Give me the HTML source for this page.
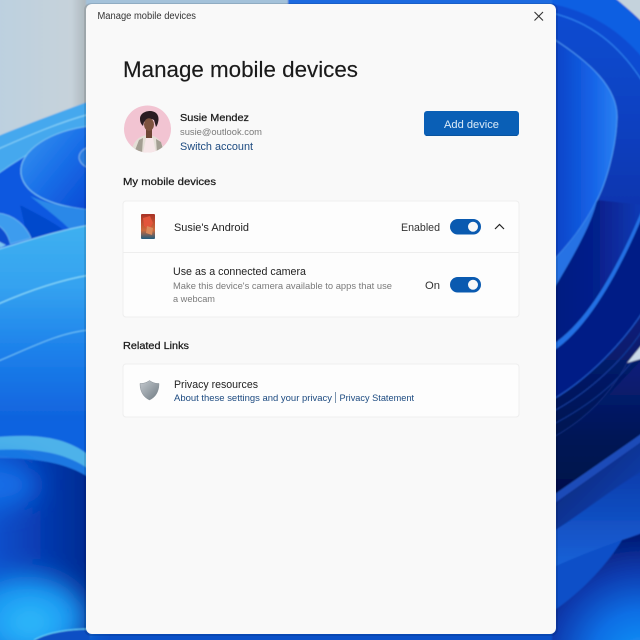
<!DOCTYPE html>
<html><head><meta charset="utf-8"><title>Manage mobile devices</title>
<style>html,body{margin:0;padding:0;width:640px;height:640px;overflow:hidden;background:#0a50c8}svg{display:block}text{font-family:"Liberation Sans",sans-serif}</style>
</head><body>
<svg xmlns="http://www.w3.org/2000/svg" width="640" height="640" viewBox="0 0 640 640">
<defs>
<filter id="soft" x="-5%" y="-5%" width="110%" height="110%"><feGaussianBlur stdDeviation=".7"/></filter>
<filter id="tiny" x="-5%" y="-5%" width="110%" height="110%"><feGaussianBlur stdDeviation=".35"/></filter>
<filter id="wide" x="-60%" y="-60%" width="220%" height="220%"><feGaussianBlur stdDeviation="13"/></filter>
<linearGradient id="sky" x1="0" y1="0" x2="1" y2="0"><stop offset="0" stop-color="#bcd0e0"/><stop offset=".8" stop-color="#c6d2da"/><stop offset="1" stop-color="#a6b0b6"/></linearGradient>
<linearGradient id="band" x1="0" y1="0" x2="0" y2="1"><stop offset="0" stop-color="#3eb0f0"/><stop offset=".3" stop-color="#34a2f0"/><stop offset=".62" stop-color="#1c80ea"/><stop offset="1" stop-color="#0e5edc"/></linearGradient>
<linearGradient id="low" x1="0" y1="0" x2="1" y2="0"><stop offset="0" stop-color="#0c50cc"/><stop offset=".5" stop-color="#063ab0"/><stop offset="1" stop-color="#032a90"/></linearGradient>
<linearGradient id="oval" x1="0" y1="0" x2="1" y2="1"><stop offset="0" stop-color="#3c98f0"/><stop offset=".5" stop-color="#1a70e8"/><stop offset="1" stop-color="#0848d4"/></linearGradient>
<linearGradient id="rb" x1="0" y1="0" x2="1" y2="0"><stop offset="0" stop-color="#0a40c4"/><stop offset=".6" stop-color="#1462e6"/><stop offset="1" stop-color="#2a80f2"/></linearGradient>
<linearGradient id="rd" x1="0" y1="0" x2="0" y2="1"><stop offset="0" stop-color="#0e4ed4"/><stop offset=".2" stop-color="#0c40c0"/><stop offset=".4" stop-color="#0a2ea4"/><stop offset="1" stop-color="#0a2ea4"/></linearGradient>
<linearGradient id="mid" x1="0" y1="0" x2="1" y2="0"><stop offset="0" stop-color="#061a80"/><stop offset=".5" stop-color="#06208c"/><stop offset="1" stop-color="#0c3cb8"/></linearGradient>
<linearGradient id="nav" x1="0" y1="0" x2="0" y2="1"><stop offset="0" stop-color="#08207c"/><stop offset=".6" stop-color="#041454"/><stop offset="1" stop-color="#03104a"/></linearGradient>
<linearGradient id="r1" x1="0" y1="0" x2="1" y2="1"><stop offset="0" stop-color="#06206c"/><stop offset="1" stop-color="#0e48c0"/></linearGradient>
<linearGradient id="r2" x1="0" y1="0" x2="0" y2="1"><stop offset="0" stop-color="#0a3cac"/><stop offset="1" stop-color="#1862d8"/></linearGradient>
<radialGradient id="rg" cx="640" cy="660" r="122" gradientUnits="userSpaceOnUse"><stop offset="0" stop-color="#1498fa"/><stop offset=".4" stop-color="#0e6ee4"/><stop offset=".72" stop-color="#0a3cb0"/><stop offset="1" stop-color="#041c78"/></radialGradient>
<linearGradient id="sh" x1="0" y1="0" x2="1" y2="1"><stop offset="0" stop-color="#c4cacf"/><stop offset=".5" stop-color="#9aa2a9"/><stop offset="1" stop-color="#6f7a82"/></linearGradient>
<linearGradient id="ph" x1="0" y1="0" x2="0" y2="1"><stop offset="0" stop-color="#a93226"/><stop offset=".65" stop-color="#cc6a3c"/><stop offset="1" stop-color="#1f5c80"/></linearGradient>
<clipPath id="av"><circle cx="147.5" cy="129" r="23.5"/></clipPath>
</defs>

<g filter="url(#soft)">
<!-- Left wallpaper -->
<rect x="-4" y="-4" width="94" height="160" fill="url(#sky)"/>
<rect x="-4" y="150" width="94" height="500" fill="#0c60e6"/>
<path d="M-4 137C30 123 60 112 90 101V232H-4Z" fill="#44a8ee"/>
<path d="M-4 150C30 135 60 122 90 114" stroke="#86d0f6" stroke-width="1.200" fill="none"/>
<path d="M-4 175C28 152 58 136 90 127V240H-4Z" fill="#0a58e0"/>
<path d="M-4 175C28 152 58 136 90 127" stroke="#6cc0f4" stroke-width="1" fill="none"/>
<path d="M90 126C52 130 18 150 21 174C25 198 60 207 90 210Z" fill="url(#oval)" stroke="#78c4f4" stroke-width="1"/>
<path d="M79 158C79 152 84 148 90 147V168C84 167 80 163 79 158Z" fill="#2c7cdf" stroke="#8ec8f0" stroke-width=".7"/>
<path d="M30 196C50 212 68 226 74 234L90 228V210C65 207 45 203 30 196Z" fill="#2a88e8"/>
<path d="M20 205C40 215 58 225 66 232L28 240Z" fill="#0648cc"/>
<path d="M-4 213C14 214 26 226 31 238L10 244C8 232 0 226 -4 224Z" fill="#3c9cee" stroke="#7cc8f6" stroke-width=".6"/>
<path d="M-4 226C4 228 8 236 10 244L-4 248Z" fill="#0a4ed0"/>
<path d="M-4 240L6 245L0 248Z" fill="#7cc4f0"/>
<path d="M-4 250C30 240 60 230 90 225V430H-4Z" fill="url(#band)"/>
<path d="M-4 250C30 240 60 230 90 225" stroke="#8cd6f8" stroke-width="1" fill="none"/>
<path d="M-4 305C30 290 60 280 90 275" stroke="#86d8f8" stroke-width="1.200" fill="none"/>
<path d="M-4 362C30 348 60 332 90 330" stroke="#70c4f6" stroke-width="1" fill="none"/>
<rect x="-4" y="420" width="94" height="50" fill="#1064e0"/>
<path d="M-4 458C35 456 65 462 90 478V650H-4Z" fill="url(#low)"/>
<path d="M-4 437C35 434 65 436 90 456V470C65 452 35 450 -4 450Z" fill="#4db2ea"/>
<path d="M-4 450C35 448 65 452 90 470V478C65 462 35 458 -4 458Z" fill="#1c78e2"/>
<ellipse cx="-8" cy="485" rx="45" ry="22" fill="#1670e8" filter="url(#wide)"/>
<ellipse cx="28" cy="618" rx="58" ry="42" fill="#1c9cf4" filter="url(#wide)"/>
<ellipse cx="30" cy="622" rx="26" ry="16" fill="#30bcfa" filter="url(#wide)"/>
<path d="M34 640C48 632 70 629 90 629V650H34Z" fill="#0a50c4"/>
<path d="M34 640C48 632 70 629 90 629" stroke="#6cdcfa" stroke-width="1" fill="none"/>

<!-- Top strip -->
<rect x="86" y="-4" width="206" height="9" fill="#a4c2da"/>
<rect x="288" y="-4" width="272" height="9" fill="#1a6ae0"/>

<!-- Right wallpaper -->
<rect x="552" y="-4" width="92" height="650" fill="url(#rd)"/>
<path d="M612 -4H644V24Q628 8 612 -4Z" fill="#c4d2dc"/>
<path d="M552 -4H612C625 5 636 18 644 26V60C620 30 590 12 552 4Z" fill="#0f5ee2"/>
<path d="M552 4C590 12 620 30 644 60V80C620 45 590 22 552 13Z" fill="#0b4cd2"/>
<path d="M552 13C590 22 620 45 644 84" stroke="#2a7eee" stroke-width="1.200" fill="none"/>
<path d="M552 262C568 245 585 225 597 200L644 205C622 268 590 330 552 354Z" fill="url(#mid)"/>
<path d="M552 38C590 62 618 88 617 118C616 150 605 185 597 200C585 225 568 245 552 262Z" fill="url(#rb)"/>
<path d="M552 38C590 62 618 88 617 118C616 150 605 185 597 200C585 225 568 245 552 262" stroke="#4c9af4" stroke-width="1" fill="none"/>
<path d="M552 262C568 245 585 225 597 200C592 225 570 262 552 292Z" fill="#2672e4"/>
<path d="M552 345C590 320 620 262 644 205L644 213C622 266 590 328 552 352Z" fill="#2470e4"/>
<path d="M644 213C622 266 590 328 552 352V400C590 378 625 340 644 310Z" fill="#061e86"/>
<path d="M552 400C590 378 625 340 644 310V360L552 500Z" fill="url(#nav)"/>
<path d="M552 400C590 378 625 340 644 310" stroke="#1c54c8" stroke-width="1.200" fill="none"/>
<path d="M552 412C590 392 625 358 644 328" stroke="#143ea0" stroke-width="1" fill="none"/>
<path d="M552 425C590 405 620 382 644 345" stroke="#103690" stroke-width="1" fill="none"/>
<path d="M552 438C585 420 610 395 627 363" stroke="#0e2e80" stroke-width="1" fill="none"/>
<path d="M552 442C585 420 610 392 644 358V432L552 497Z" fill="url(#nav)"/>
<path d="M627 363L644 342V358Z" fill="#cadae8"/>
<path d="M552 496L644 432V440L552 505Z" fill="#1a4cb8"/>
<path d="M552 505L644 440V470C610 490 580 515 552 532Z" fill="url(#r1)"/>
<path d="M552 532C580 515 610 490 644 470V532C610 545 580 555 552 568Z" fill="url(#r2)"/>
<path d="M552 612C585 590 610 560 622 540L644 533V650H552Z" fill="url(#rg)"/>
<path d="M552 568C580 555 600 548 622 540C610 560 585 590 552 612Z" fill="#0f50c8"/>
</g>

<!-- Window -->
<rect x="84" y="3" width="474" height="633" rx="7" fill="#000" opacity=".1"/>
<rect x="86" y="4" width="470" height="630" rx="6" fill="#f9f9f9"/>
<text x="97.5" y="19" font-size="10" fill="#333" textLength="98.5" lengthAdjust="spacingAndGlyphs">Manage mobile devices</text>
<path d="M534.5 12L543 20.5M543 12L534.5 20.5" stroke="#333" stroke-width="1.1" fill="none"/>
<text x="123" y="77" font-size="22.5" fill="#1a1a1a" stroke="#1a1a1a" stroke-width=".15" textLength="235" lengthAdjust="spacingAndGlyphs">Manage mobile devices</text>

<!-- Avatar -->
<circle cx="147.5" cy="129" r="23.5" fill="#f2c4d2"/>
<g clip-path="url(#av)"><g filter="url(#tiny)">
<path d="M131 153C133 141 139 136 147 135C156 135 162 140 165 153Z" fill="#e4ded6"/>
<path d="M143 153L146 138L153 138L156 153Z" fill="#f6e6e8"/>
<path d="M134 153L139 140L143 138L142 153Z" fill="#a39e92"/>
<path d="M157 153L156 139L161 142L164 153Z" fill="#a39e92"/>
<path d="M146 129L152 129L152 138L146 138Z" fill="#6d4434"/>
<path d="M140 119C140 113 146 111 150 111C155 111 159 114 158.500 120C158 123 157.500 125 156 127L154 120C151 118 147 119 144 122L143 126C141 124 140 122 140 119Z" fill="#2a1f20"/>
<ellipse cx="149" cy="124.500" rx="5" ry="6.300" fill="#7e5240"/>
</g></g>

<text x="180" y="121" font-size="10.5" fill="#1a1a1a" stroke="#1a1a1a" stroke-width=".25" textLength="69" lengthAdjust="spacingAndGlyphs">Susie Mendez</text>
<text x="180" y="135" font-size="9.5" fill="#7a7a7a" textLength="82" lengthAdjust="spacingAndGlyphs">susie@outlook.com</text>
<text x="180" y="150" font-size="11" fill="#1c4a80" textLength="73" lengthAdjust="spacingAndGlyphs">Switch account</text>

<rect x="424" y="111" width="95" height="25" rx="3" fill="#0a5fb6"/>
<rect x="426" y="135" width="91" height="1" fill="#0a549e"/>
<text x="444" y="128" font-size="11" fill="#dcebf8" textLength="55" lengthAdjust="spacingAndGlyphs">Add device</text>

<text x="123" y="185" font-size="10.5" fill="#1a1a1a" stroke="#1a1a1a" stroke-width=".25" textLength="93" lengthAdjust="spacingAndGlyphs">My mobile devices</text>

<!-- Device card -->
<rect x="123" y="201" width="396" height="116" rx="3" fill="#fdfdfd" stroke="#eeeeee"/>
<rect x="123.500" y="252" width="395" height="1" fill="#eeeeee"/>
<g filter="url(#tiny)">
<rect x="141" y="214" width="14" height="25" rx="1" fill="url(#ph)"/>
<path d="M143 218L150 216L153 223L149 230L144 226Z" fill="#e2543a"/>
<path d="M147 226L153 228L152 235L146 233Z" fill="#d98a5c"/>
</g>
<text x="174" y="231" font-size="11" fill="#222" textLength="75" lengthAdjust="spacingAndGlyphs">Susie's Android</text>
<text x="401" y="231" font-size="11" fill="#333" textLength="39" lengthAdjust="spacingAndGlyphs">Enabled</text>
<rect x="450" y="219" width="31" height="15.500" rx="7.750" fill="#0a5ab0"/>
<circle cx="473" cy="226.750" r="5" fill="#f8f8f8"/>
<path d="M495 229L499.500 224.500L504 229" stroke="#222" stroke-width="1.200" fill="none"/>

<text x="173" y="275" font-size="11" fill="#222" textLength="133" lengthAdjust="spacingAndGlyphs">Use as a connected camera</text>
<text x="173" y="289" font-size="9.500" fill="#7a7a7a" textLength="219" lengthAdjust="spacingAndGlyphs">Make this device's camera available to apps that use</text>
<text x="173" y="302" font-size="9.500" fill="#7a7a7a" textLength="42" lengthAdjust="spacingAndGlyphs">a webcam</text>
<text x="425" y="289" font-size="11" fill="#333" textLength="15" lengthAdjust="spacingAndGlyphs">On</text>
<rect x="450" y="277" width="31" height="15.500" rx="7.750" fill="#0a5ab0"/>
<circle cx="473" cy="284.750" r="5" fill="#f8f8f8"/>

<text x="123" y="349" font-size="10.500" fill="#1a1a1a" stroke="#1a1a1a" stroke-width=".25" textLength="66" lengthAdjust="spacingAndGlyphs">Related Links</text>

<!-- Links card -->
<rect x="123" y="364" width="396" height="53" rx="3" fill="#fdfdfd" stroke="#eeeeee"/>
<g filter="url(#tiny)">
<path d="M149.500 380.500C146 383 143 383.500 140 383.500C140 391 143 397 149.500 400C156 397 159 391 159 383.500C156 383.500 153 383 149.500 380.500Z" fill="url(#sh)" stroke="#858d94" stroke-width=".5"/>
</g>
<text x="174" y="388" font-size="11" fill="#222" textLength="84" lengthAdjust="spacingAndGlyphs">Privacy resources</text>
<text x="174" y="401" font-size="9.500" fill="#1c4a80" textLength="158" lengthAdjust="spacingAndGlyphs">About these settings and your privacy</text>
<rect x="335" y="392" width="1" height="11" fill="#7c94ae"/>
<text x="339.500" y="401" font-size="9.500" fill="#1c4a80" textLength="74.500" lengthAdjust="spacingAndGlyphs">Privacy Statement</text>
</svg>
</body></html>
